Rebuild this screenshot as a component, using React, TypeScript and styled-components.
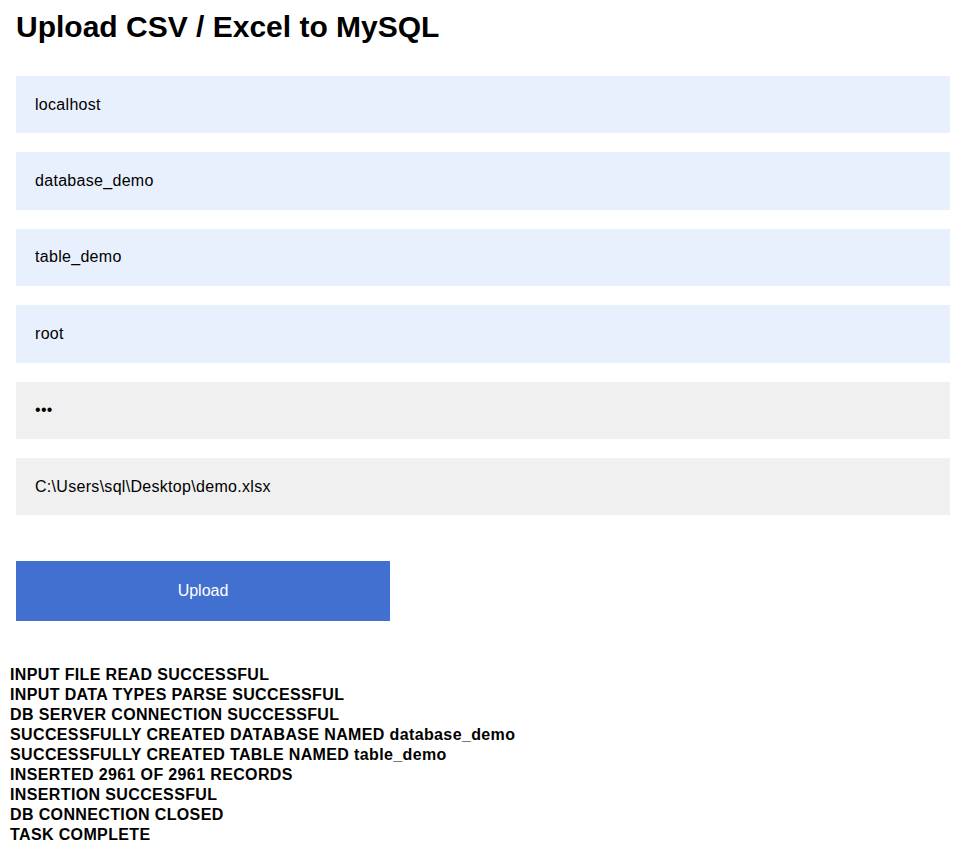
import React from "react";
import styled, { createGlobalStyle } from "styled-components";

const GlobalStyle = createGlobalStyle`
  html, body {
    margin: 0;
    padding: 0;
    background: #ffffff;
    font-family: "Liberation Sans", Arial, sans-serif;
    color: #000000;
  }
`;

interface IField {
  value: string;
  filled?: boolean;
  password?: boolean;
}

const fields: IField[] = [
  { value: "localhost", filled: true },
  { value: "database_demo", filled: true },
  { value: "table_demo", filled: true },
  { value: "root", filled: true },
  { value: "123", password: true },
  { value: "C:\\Users\\sql\\Desktop\\demo.xlsx" },
];

const logLines = [
  "INPUT FILE READ SUCCESSFUL",
  "INPUT DATA TYPES PARSE SUCCESSFUL",
  "DB SERVER CONNECTION SUCCESSFUL",
  "SUCCESSFULLY CREATED DATABASE NAMED database_demo",
  "SUCCESSFULLY CREATED TABLE NAMED table_demo",
  "INSERTED 2961 OF 2961 RECORDS",
  "INSERTION SUCCESSFUL",
  "DB CONNECTION CLOSED",
  "TASK COMPLETE",
];

export default function App() {
  return (
    <>
      <GlobalStyle />
      <Page>
        <Title>Upload CSV / Excel to MySQL</Title>
        <UploadForm onSubmit={(e) => e.preventDefault()}>
          {fields.map((f, i) => (
            <Field
              key={i}
              type={f.password ? "password" : "text"}
              value={f.value}
              readOnly
              $filled={f.filled}
            />
          ))}
          <UploadButton type="submit">Upload</UploadButton>
        </UploadForm>
        <Log>
          {logLines.map((line) => (
            <LogLine key={line}>{line}</LogLine>
          ))}
        </Log>
      </Page>
    </>
  );
}

const Page = styled.div`
  width: 972px;
  padding-top: 10px;
  padding-bottom: 12px;
`;

const Title = styled.h1`
  margin: 0 0 0 16px;
  font-size: 30px;
  line-height: 34px;
  font-weight: 700;
`;

const UploadForm = styled.form`
  display: flex;
  flex-direction: column;
  align-items: flex-start;
  gap: 19px;
  margin: 32px 22px 0 16px;
`;

const Field = styled.input<{ $filled?: boolean }>`
  box-sizing: border-box;
  width: 100%;
  height: 57.4px;
  margin: 0;
  padding: 0 19px;
  border: none;
  outline: none;
  background: ${(p) => (p.$filled ? "#e8f0fe" : "#f0f0f0")};
  font-family: "Liberation Sans", Arial, sans-serif;
  font-size: 16px;
  letter-spacing: 0.3px;
  color: #000000;
`;

const UploadButton = styled.button`
  box-sizing: border-box;
  width: 374px;
  height: 60px;
  margin-top: 26.6px;
  border: none;
  background: #4270d0;
  color: #ffffff;
  font-family: "Liberation Sans", Arial, sans-serif;
  font-size: 16px;
  cursor: pointer;
`;

const Log = styled.div`
  margin: 44px 0 0 10px;
`;

const LogLine = styled.div`
  font-size: 16px;
  line-height: 20px;
  font-weight: 700;
  letter-spacing: 0.37px;
`;
